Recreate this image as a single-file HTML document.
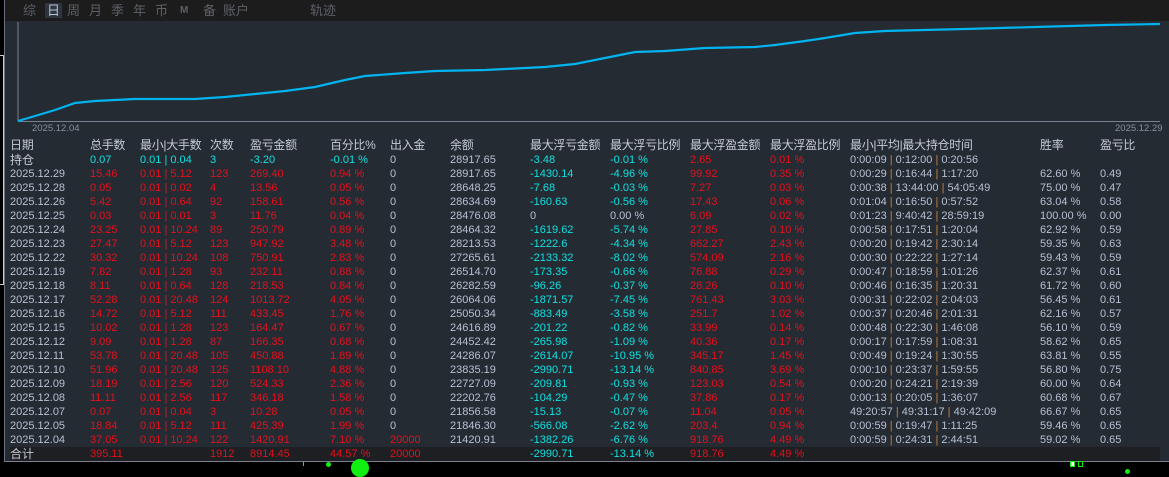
<!DOCTYPE html>
<html><head><meta charset="utf-8">
<style>
*{margin:0;padding:0;box-sizing:border-box}
body{width:1169px;height:472px;background:#000;overflow:hidden;font-family:"Liberation Sans","Noto Sans CJK SC",sans-serif;position:relative}
#panel{position:absolute;left:4px;top:0;width:1165px;height:462px;background:#252b33;border-left:1px solid #6a7080;border-bottom:1px solid #7a8090}
#tabs{position:absolute;left:0;top:0;width:1165px;height:21px;background:#1c1c1c;color:#5c6068;font-size:13px}
#tabs span{position:absolute;top:3px;line-height:15px}
#tabs .on{background:#2e3540;color:#b8c2d0;padding:0 2px;margin-left:-2px}
table{position:absolute;left:5px;top:138px;border-collapse:collapse;table-layout:fixed;font-size:11px}
td{height:14px;line-height:14px;white-space:nowrap;overflow:visible;padding:0;color:#b6c0d2;vertical-align:middle}
tr.h td{font-size:12px;color:#c4cad6;height:15px;line-height:15px;letter-spacing:-0.3px}
.r{color:#e4101c}.c{color:#10e0e0}
.p{color:#c8803a}
tr.t td{background:#1e1f22}
</style></head><body>
<div style="position:absolute;left:0;top:55px;width:4px;height:230px;border:1px solid #ccc;border-left:none"></div>
<div id="panel">
<div id="tabs">
<span style="left:18px">综</span><span class="on" style="left:42px">日</span><span style="left:62px">周</span><span style="left:84px">月</span><span style="left:106px">季</span><span style="left:128px">年</span><span style="left:150px">币</span><span style="left:175px;font-size:10px;font-weight:bold">M</span><span style="left:198px">备</span><span style="left:218px">账户</span><span style="left:305px">轨迹</span>
</div>
<svg style="position:absolute;left:0;top:0" width="1165" height="140">
<line x1="13" y1="22" x2="13" y2="121" stroke="#7a8090" stroke-width="1"/>
<line x1="13" y1="121.5" x2="1155" y2="121.5" stroke="#7a8090" stroke-width="1"/>
<polyline fill="none" stroke="#00b4f0" stroke-width="2.2" points="13,121 30,116 50,110 70,103 90,101 110,100 130,99 190,99 220,97 250,94 280,91 310,87 340,80 360,76 400,73 430,71 480,70 500,69 540,67 570,64 600,58 630,52 660,51 700,48 750,47 770,45 800,41 820,38 850,33 880,31 960,29 1030,27 1100,25 1155,24"/>
<text x="27" y="131" fill="#8a909c" font-size="9.5" font-family="Liberation Sans">2025.12.04</text>
<text x="1110" y="131" fill="#8a909c" font-size="9.5" font-family="Liberation Sans">2025.12.29</text>
</svg>
<table>
<colgroup><col style="width:80px"><col style="width:50px"><col style="width:70px"><col style="width:40px"><col style="width:80px"><col style="width:60px"><col style="width:60px"><col style="width:80px"><col style="width:80px"><col style="width:80px"><col style="width:80px"><col style="width:80px"><col style="width:190px"><col style="width:60px"><col style="width:60px"></colgroup>
<tr class="h"><td>日期</td><td>总手数</td><td>最小|大手数</td><td>次数</td><td>盈亏金额</td><td>百分比%</td><td>出入金</td><td>余额</td><td>最大浮亏金额</td><td>最大浮亏比例</td><td>最大浮盈金额</td><td>最大浮盈比例</td><td>最小|平均|最大持仓时间</td><td>胜率</td><td>盈亏比</td></tr>
<tr><td style="font-size:12px;color:#c4cad6">持仓</td><td class="c">0.07</td><td class="c">0.01 | 0.04</td><td class="c">3</td><td class="c">-3.20</td><td class="c">-0.01 %</td><td>0</td><td>28917.65</td><td class="c">-3.48</td><td class="c">-0.01 %</td><td class="r">2.65</td><td class="r">0.01 %</td><td>0:00:09 <span class="p">|</span> 0:12:00 <span class="p">|</span> 0:20:56</td><td></td><td></td></tr>
<tr><td>2025.12.29</td><td class="r">15.46</td><td class="r">0.01 | 5.12</td><td class="r">123</td><td class="r">269.40</td><td class="r">0.94 %</td><td>0</td><td>28917.65</td><td class="c">-1430.14</td><td class="c">-4.96 %</td><td class="r">99.92</td><td class="r">0.35 %</td><td>0:00:29 <span class="p">|</span> 0:16:44 <span class="p">|</span> 1:17:20</td><td>62.60 %</td><td>0.49</td></tr>
<tr><td>2025.12.28</td><td class="r">0.05</td><td class="r">0.01 | 0.02</td><td class="r">4</td><td class="r">13.56</td><td class="r">0.05 %</td><td>0</td><td>28648.25</td><td class="c">-7.68</td><td class="c">-0.03 %</td><td class="r">7.27</td><td class="r">0.03 %</td><td>0:00:38 <span class="p">|</span> 13:44:00 <span class="p">|</span> 54:05:49</td><td>75.00 %</td><td>0.47</td></tr>
<tr><td>2025.12.26</td><td class="r">5.42</td><td class="r">0.01 | 0.64</td><td class="r">92</td><td class="r">158.61</td><td class="r">0.56 %</td><td>0</td><td>28634.69</td><td class="c">-160.63</td><td class="c">-0.56 %</td><td class="r">17.43</td><td class="r">0.06 %</td><td>0:01:04 <span class="p">|</span> 0:16:50 <span class="p">|</span> 0:57:52</td><td>63.04 %</td><td>0.58</td></tr>
<tr><td>2025.12.25</td><td class="r">0.03</td><td class="r">0.01 | 0.01</td><td class="r">3</td><td class="r">11.76</td><td class="r">0.04 %</td><td>0</td><td>28476.08</td><td>0</td><td>0.00 %</td><td class="r">6.09</td><td class="r">0.02 %</td><td>0:01:23 <span class="p">|</span> 9:40:42 <span class="p">|</span> 28:59:19</td><td>100.00 %</td><td>0.00</td></tr>
<tr><td>2025.12.24</td><td class="r">23.25</td><td class="r">0.01 | 10.24</td><td class="r">89</td><td class="r">250.79</td><td class="r">0.89 %</td><td>0</td><td>28464.32</td><td class="c">-1619.62</td><td class="c">-5.74 %</td><td class="r">27.85</td><td class="r">0.10 %</td><td>0:00:58 <span class="p">|</span> 0:17:51 <span class="p">|</span> 1:20:04</td><td>62.92 %</td><td>0.59</td></tr>
<tr><td>2025.12.23</td><td class="r">27.47</td><td class="r">0.01 | 5.12</td><td class="r">123</td><td class="r">947.92</td><td class="r">3.48 %</td><td>0</td><td>28213.53</td><td class="c">-1222.6</td><td class="c">-4.34 %</td><td class="r">662.27</td><td class="r">2.43 %</td><td>0:00:20 <span class="p">|</span> 0:19:42 <span class="p">|</span> 2:30:14</td><td>59.35 %</td><td>0.63</td></tr>
<tr><td>2025.12.22</td><td class="r">30.32</td><td class="r">0.01 | 10.24</td><td class="r">108</td><td class="r">750.91</td><td class="r">2.83 %</td><td>0</td><td>27265.61</td><td class="c">-2133.32</td><td class="c">-8.02 %</td><td class="r">574.09</td><td class="r">2.16 %</td><td>0:00:30 <span class="p">|</span> 0:22:22 <span class="p">|</span> 1:27:14</td><td>59.43 %</td><td>0.59</td></tr>
<tr><td>2025.12.19</td><td class="r">7.82</td><td class="r">0.01 | 1.28</td><td class="r">93</td><td class="r">232.11</td><td class="r">0.88 %</td><td>0</td><td>26514.70</td><td class="c">-173.35</td><td class="c">-0.66 %</td><td class="r">76.88</td><td class="r">0.29 %</td><td>0:00:47 <span class="p">|</span> 0:18:59 <span class="p">|</span> 1:01:26</td><td>62.37 %</td><td>0.61</td></tr>
<tr><td>2025.12.18</td><td class="r">8.11</td><td class="r">0.01 | 0.64</td><td class="r">128</td><td class="r">218.53</td><td class="r">0.84 %</td><td>0</td><td>26282.59</td><td class="c">-96.26</td><td class="c">-0.37 %</td><td class="r">26.26</td><td class="r">0.10 %</td><td>0:00:46 <span class="p">|</span> 0:16:35 <span class="p">|</span> 1:20:31</td><td>61.72 %</td><td>0.60</td></tr>
<tr><td>2025.12.17</td><td class="r">52.28</td><td class="r">0.01 | 20.48</td><td class="r">124</td><td class="r">1013.72</td><td class="r">4.05 %</td><td>0</td><td>26064.06</td><td class="c">-1871.57</td><td class="c">-7.45 %</td><td class="r">761.43</td><td class="r">3.03 %</td><td>0:00:31 <span class="p">|</span> 0:22:02 <span class="p">|</span> 2:04:03</td><td>56.45 %</td><td>0.61</td></tr>
<tr><td>2025.12.16</td><td class="r">14.72</td><td class="r">0.01 | 5.12</td><td class="r">111</td><td class="r">433.45</td><td class="r">1.76 %</td><td>0</td><td>25050.34</td><td class="c">-883.49</td><td class="c">-3.58 %</td><td class="r">251.7</td><td class="r">1.02 %</td><td>0:00:37 <span class="p">|</span> 0:20:46 <span class="p">|</span> 2:01:31</td><td>62.16 %</td><td>0.57</td></tr>
<tr><td>2025.12.15</td><td class="r">10.02</td><td class="r">0.01 | 1.28</td><td class="r">123</td><td class="r">164.47</td><td class="r">0.67 %</td><td>0</td><td>24616.89</td><td class="c">-201.22</td><td class="c">-0.82 %</td><td class="r">33.99</td><td class="r">0.14 %</td><td>0:00:48 <span class="p">|</span> 0:22:30 <span class="p">|</span> 1:46:08</td><td>56.10 %</td><td>0.59</td></tr>
<tr><td>2025.12.12</td><td class="r">9.09</td><td class="r">0.01 | 1.28</td><td class="r">87</td><td class="r">166.35</td><td class="r">0.68 %</td><td>0</td><td>24452.42</td><td class="c">-265.98</td><td class="c">-1.09 %</td><td class="r">40.36</td><td class="r">0.17 %</td><td>0:00:17 <span class="p">|</span> 0:17:59 <span class="p">|</span> 1:08:31</td><td>58.62 %</td><td>0.65</td></tr>
<tr><td>2025.12.11</td><td class="r">53.78</td><td class="r">0.01 | 20.48</td><td class="r">105</td><td class="r">450.88</td><td class="r">1.89 %</td><td>0</td><td>24286.07</td><td class="c">-2614.07</td><td class="c">-10.95 %</td><td class="r">345.17</td><td class="r">1.45 %</td><td>0:00:49 <span class="p">|</span> 0:19:24 <span class="p">|</span> 1:30:55</td><td>63.81 %</td><td>0.55</td></tr>
<tr><td>2025.12.10</td><td class="r">51.96</td><td class="r">0.01 | 20.48</td><td class="r">125</td><td class="r">1108.10</td><td class="r">4.88 %</td><td>0</td><td>23835.19</td><td class="c">-2990.71</td><td class="c">-13.14 %</td><td class="r">840.85</td><td class="r">3.69 %</td><td>0:00:10 <span class="p">|</span> 0:23:37 <span class="p">|</span> 1:59:55</td><td>56.80 %</td><td>0.75</td></tr>
<tr><td>2025.12.09</td><td class="r">18.19</td><td class="r">0.01 | 2.56</td><td class="r">120</td><td class="r">524.33</td><td class="r">2.36 %</td><td>0</td><td>22727.09</td><td class="c">-209.81</td><td class="c">-0.93 %</td><td class="r">123.03</td><td class="r">0.54 %</td><td>0:00:20 <span class="p">|</span> 0:24:21 <span class="p">|</span> 2:19:39</td><td>60.00 %</td><td>0.64</td></tr>
<tr><td>2025.12.08</td><td class="r">11.11</td><td class="r">0.01 | 2.56</td><td class="r">117</td><td class="r">346.18</td><td class="r">1.58 %</td><td>0</td><td>22202.76</td><td class="c">-104.29</td><td class="c">-0.47 %</td><td class="r">37.86</td><td class="r">0.17 %</td><td>0:00:13 <span class="p">|</span> 0:20:05 <span class="p">|</span> 1:36:07</td><td>60.68 %</td><td>0.67</td></tr>
<tr><td>2025.12.07</td><td class="r">0.07</td><td class="r">0.01 | 0.04</td><td class="r">3</td><td class="r">10.28</td><td class="r">0.05 %</td><td>0</td><td>21856.58</td><td class="c">-15.13</td><td class="c">-0.07 %</td><td class="r">11.04</td><td class="r">0.05 %</td><td>49:20:57 <span class="p">|</span> 49:31:17 <span class="p">|</span> 49:42:09</td><td>66.67 %</td><td>0.65</td></tr>
<tr><td>2025.12.05</td><td class="r">18.84</td><td class="r">0.01 | 5.12</td><td class="r">111</td><td class="r">425.39</td><td class="r">1.99 %</td><td>0</td><td>21846.30</td><td class="c">-566.08</td><td class="c">-2.62 %</td><td class="r">203.4</td><td class="r">0.94 %</td><td>0:00:59 <span class="p">|</span> 0:19:47 <span class="p">|</span> 1:11:25</td><td>59.46 %</td><td>0.65</td></tr>
<tr><td>2025.12.04</td><td class="r">37.05</td><td class="r">0.01 | 10.24</td><td class="r">122</td><td class="r">1420.91</td><td class="r">7.10 %</td><td class="r">20000</td><td>21420.91</td><td class="c">-1382.26</td><td class="c">-6.76 %</td><td class="r">918.76</td><td class="r">4.49 %</td><td>0:00:59 <span class="p">|</span> 0:24:31 <span class="p">|</span> 2:44:51</td><td>59.02 %</td><td>0.65</td></tr>
<tr class="t"><td style="font-size:12px;color:#c4cad6">合计</td><td class="r">395.11</td><td></td><td class="r">1912</td><td class="r">8914.45</td><td class="r">44.57 %</td><td class="r">20000</td><td></td><td class="c">-2990.71</td><td class="c">-13.14 %</td><td class="r">918.76</td><td class="r">4.49 %</td><td></td><td></td><td></td></tr>
</table>
</div>
<div style="position:absolute;left:303px;top:462px;width:1px;height:4px;background:#1e1"></div>
<div style="position:absolute;left:326px;top:462px;width:5px;height:5px;border-radius:50%;background:#1e1"></div>
<div style="position:absolute;left:351px;top:459px;width:18px;height:18px;border-radius:50%;background:#1e1"></div>
<div style="position:absolute;left:1070px;top:461px;width:5px;height:6px;background:#fff;border:1px solid #1e1"></div>
<div style="position:absolute;left:1078px;top:461px;width:5px;height:6px;border:1px solid #1e1"></div>
<div style="position:absolute;left:1125px;top:469px;width:5px;height:5px;border-radius:50%;background:#1e1"></div>
</body></html>
